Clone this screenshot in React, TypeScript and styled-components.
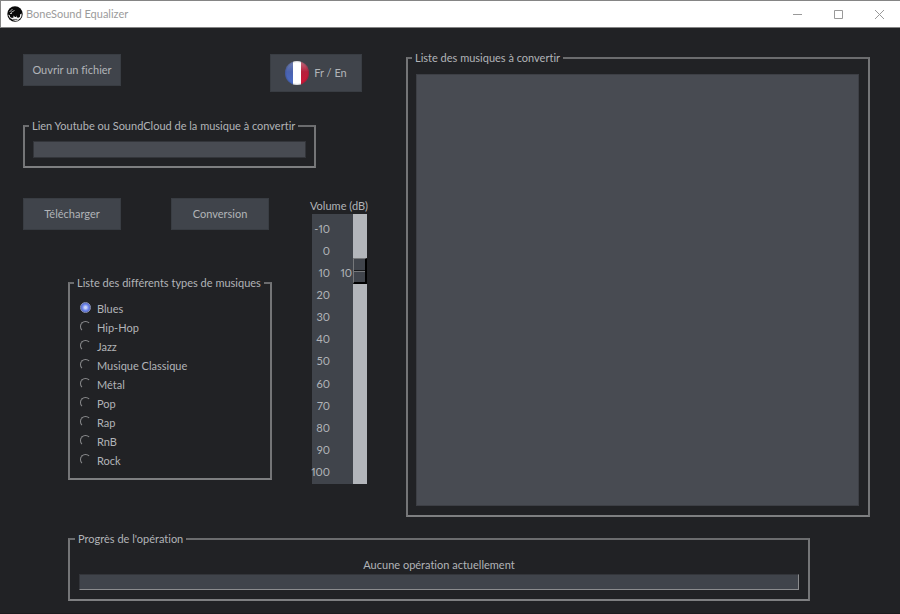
import React, { useState } from "react";
import styled, { createGlobalStyle } from "styled-components";

const GlobalStyle = createGlobalStyle`
  * { box-sizing: border-box; }
  body {
    margin: 0;
    background: #212225;
    color: #b2b4b8;
    font-family: Lato, "Noto Sans", sans-serif;
    font-size: 11px;
    font-variant-ligatures: none;
    line-height: 16px;
  }
  button, input, select { font: inherit; color: inherit; }
`;

const Window = styled.div`
  min-height: 100vh;
  display: flex;
  flex-direction: column;
  border-bottom: 1px solid #1b1a1d;
`;

const TitleBar = styled.header`
  display: flex;
  align-items: center;
  height: 28px;
  padding-left: 6px;
  background: #fff;
  border: 1px solid #858585;
  border-right: 0;
  color: #9b9b9b;
`;

const Title = styled.h1`
  flex: 1;
  margin: 0 0 0 3px;
  font-size: 11px;
  font-weight: 400;
`;

const WindowButton = styled.button`
  display: grid;
  place-items: center;
  width: 41px;
  height: 26px;
  padding: 0;
  border: 0;
  background: none;
`;

const Content = styled.main`
  flex: 1;
  display: grid;
  grid-template-columns: 346px 1fr;
  grid-template-rows: 1fr auto;
  column-gap: 37px;
  row-gap: 14px;
  padding: 22px 30px 12px 23px;
`;

const Controls = styled.div`
  display: flex;
  flex-direction: column;
  padding-top: 4px;
`;

const TopRow = styled.div`
  display: flex;
  align-items: flex-start;
  justify-content: space-between;
  padding-right: 7px;
`;

const Button = styled.button<{ $large?: boolean }>`
  display: flex;
  align-items: center;
  justify-content: center;
  gap: 5px;
  width: ${(p) => (p.$large ? 92 : 98)}px;
  height: ${(p) => (p.$large ? 38 : 32)}px;
  padding: 0;
  border: 1px solid #393d43;
  background: #40444b;
  font-variant-ligatures: none;
`;

const Group = styled.fieldset`
  display: flex;
  flex-direction: column;
  min-width: 0;
  margin: 0;
  padding: 8px;
  border: 2px solid;
  border-color: #6b6c6e #747577 #7e7f81 #747577;
`;

const Legend = styled.legend`
  margin-left: -4px;
  padding: 0 3px;
  white-space: nowrap;
`;

const LinkGroup = styled(Group)`
  width: 293px;
  margin-top: 26px;
  padding: 7px 8px 8px;
`;

const LinkInput = styled.input`
  width: 100%;
  height: 17px;
  padding: 0 2px;
  border: 1px solid #33353a;
  background: #484b52;
`;

const LowerArea = styled.div`
  display: flex;
  justify-content: space-between;
  margin-top: 30px;
`;

const GenreColumn = styled.div`
  width: 249px;
`;

const Actions = styled.div`
  display: flex;
  gap: 50px;
`;

const GenreGroup = styled(Group)`
  width: 204px;
  margin: 45px 0 0 45px;
`;

const Genre = styled.label`
  display: flex;
  align-items: center;
  gap: 6px;
  height: 19px;
  padding-left: 2px;
`;

const Radio = styled.input`
  appearance: none;
  width: 11px;
  height: 11px;
  margin: 0 0 2px;
  border: 1px solid transparent;
  border-top-color: #8a8b8d;
  border-left-color: #8a8b8d;
  border-radius: 50%;

  &:checked {
    border-color: #8a93b5;
    background: radial-gradient(circle, #c8d2f8 0 1px, #7189ee 3px, #4c5fbc 5px);
  }
`;

const Volume = styled.div`
  display: flex;
  flex-direction: column;
  width: 59px;
  white-space: nowrap;
`;

const VolumeBody = styled.div`
  display: flex;
  width: 55px;
  height: 270px;
  margin-left: 2px;
  background: #40444b;
  font-variant-numeric: proportional-nums;
`;

const Ticks = styled.ol`
  display: flex;
  flex-direction: column;
  justify-content: space-between;
  width: 18px;
  margin: 0;
  padding: 7px 0 4px;
  list-style: none;
`;

const Tick = styled.li`
  display: flex;
  justify-content: flex-end;
`;

const ValueColumn = styled.div`
  width: 23px;
  padding-right: 1px;
  text-align: right;
`;

const Slider = styled.input`
  appearance: none;
  writing-mode: vertical-lr;
  width: 14px;
  height: 270px;
  margin: 0;
  background: #b3b6bb;

  &::-webkit-slider-thumb {
    appearance: none;
    width: 14px;
    height: 26px;
    border: 1px solid;
    border-width: 1px 2px 2px 1px;
    border-color: #75777a #000 #000 #75777a;
    background: linear-gradient(#40444b 0 11px, #17181a 11px 12px, #75777a 12px 13px, #40444b 13px);
  }
`;

const ListGroup = styled(Group)`
  padding: 8px 9px 9px 8px;
`;

const SongList = styled.select`
  appearance: none;
  flex: 1;
  width: 100%;
  min-height: 200px;
  padding: 0;
  border: 1px solid #3d3f45;
  border-radius: 0;
  background: #484b52;
`;

const ProgressGroup = styled(Group)`
  grid-column: 1 / -1;
  margin: 0 60px 0 45px;
  padding: 10px 9px 9px;
`;

const Status = styled.p`
  margin: 0 0 1px;
  text-align: center;
`;

const Progress = styled.progress`
  appearance: none;
  display: block;
  width: 100%;
  height: 16px;
  border: 1px solid;
  border-color: #33353a #8b8c8e #8b8c8e #33353a;
  background: #40444b;

  &::-webkit-progress-bar { background: #40444b; }
`;

const genres = ["Blues", "Hip-Hop", "Jazz", "Musique Classique", "Métal", "Pop", "Rap", "RnB", "Rock"];
const ticks = [-10, 0, 10, 20, 30, 40, 50, 60, 70, 80, 90, 100];

const SkullLogo = () => (
  <svg width="16" height="16" viewBox="0 0 16 16" aria-hidden="true">
    <circle cx="8" cy="8" r="7.7" fill="#080808" />
    <path d="M2.500 6l3-3M4 6.500l3.500-2M3 7.500h2" fill="none" stroke="#ccc" strokeWidth=".9" />
    <path d="M1 8.500l2 1v1.500l2 1 1.500-.5V9.500l1.500 1.500h1V9.500l1 2 1.500.2 1.500-1V8.500l1.700-1-.3 3-1.200 2-1.500.9-.5 1-2.500.5-2.500-.6-1.500-1.200-1.800-1z" fill="#f5f5f5" />
    <path d="M5.500 13.500h5M7 12.800v1.500M9 12.800v1.500" stroke="#333" strokeWidth=".6" />
  </svg>
);

const FrenchFlag = () => (
  <svg width="24" height="24" viewBox="0 0 24 24" aria-hidden="true">
    <defs>
      <clipPath id="disc"><circle cx="12" cy="12" r="12" /></clipPath>
      <linearGradient id="blue" x1="0" y1="0" x2="0" y2="1">
        <stop offset="0" stopColor="#7482ad" />
        <stop offset=".45" stopColor="#4a62ae" />
        <stop offset="1" stopColor="#4a6cc8" />
      </linearGradient>
      <linearGradient id="red" x1="0" y1="0" x2="0" y2="1">
        <stop offset="0" stopColor="#c07080" />
        <stop offset=".45" stopColor="#b5203c" />
        <stop offset="1" stopColor="#d01535" />
      </linearGradient>
      <radialGradient id="rim">
        <stop offset=".85" stopColor="#101830" stopOpacity="0" />
        <stop offset="1" stopColor="#101830" stopOpacity=".2" />
      </radialGradient>
    </defs>
    <g clipPath="url(#disc)">
      <path d="M0 0h8v24H0z" fill="url(#blue)" />
      <path d="M8 0h8v24H8z" fill="#fff" />
      <path d="M16 0h8v24h-8z" fill="url(#red)" />
      <circle cx="12" cy="12" r="12" fill="url(#rim)" />
    </g>
  </svg>
);

export default function App() {
  const [genre, setGenre] = useState("Blues");
  const [volume, setVolume] = useState(10);
  const valueOffset = Math.round(((volume + 10) / 110) * 244) + 7;

  return (
    <>
      <GlobalStyle />
      <Window>
        <TitleBar>
          <SkullLogo />
          <Title>BoneSound Equalizer</Title>
          <WindowButton aria-label="Réduire">
            <svg width="11" height="11" stroke="#999" fill="none"><path d="M1 5.500h9" /></svg>
          </WindowButton>
          <WindowButton aria-label="Agrandir">
            <svg width="11" height="11" stroke="#999" fill="none"><path d="M1.500 1.500h8v8h-8z" /></svg>
          </WindowButton>
          <WindowButton aria-label="Fermer">
            <svg width="11" height="11" stroke="#999" fill="none"><path d="M1 1l9 9M10 1l-9 9" /></svg>
          </WindowButton>
        </TitleBar>
        <Content>
          <Controls>
            <TopRow>
              <Button>Ouvrir un fichier</Button>
              <Button $large><FrenchFlag />Fr / En</Button>
            </TopRow>
            <LinkGroup>
              <Legend>Lien Youtube ou SoundCloud de la musique à convertir</Legend>
              <LinkInput type="text" aria-label="Lien Youtube ou SoundCloud de la musique à convertir" />
            </LinkGroup>
            <LowerArea>
              <GenreColumn>
                <Actions>
                  <Button>Télécharger</Button>
                  <Button>Conversion</Button>
                </Actions>
                <GenreGroup>
                  <Legend>Liste des différents types de musiques</Legend>
                  {genres.map((name) => (
                    <Genre key={name}>
                      <Radio type="radio" name="genre" checked={genre === name} onChange={() => setGenre(name)} />
                      {name}
                    </Genre>
                  ))}
                </GenreGroup>
              </GenreColumn>
              <Volume>
                <label htmlFor="volume">Volume (dB)</label>
                <VolumeBody>
                  <Ticks>
                    {ticks.map((t) => <Tick key={t}>{t}</Tick>)}
                  </Ticks>
                  <ValueColumn style={{ paddingTop: valueOffset }}>{volume}</ValueColumn>
                  <Slider
                    id="volume"
                    type="range"
                    min={-10}
                    max={100}
                    value={volume}
                    onChange={(e) => setVolume(Number(e.target.value))}
                  />
                </VolumeBody>
              </Volume>
            </LowerArea>
          </Controls>
          <ListGroup>
            <Legend>Liste des musiques à convertir</Legend>
            <SongList multiple aria-label="Liste des musiques à convertir" />
          </ListGroup>
          <ProgressGroup>
            <Legend>Progrès de l'opération</Legend>
            <Status>Aucune opération actuellement</Status>
            <Progress value={0} max={100} aria-label="Progrès de l'opération" />
          </ProgressGroup>
        </Content>
      </Window>
    </>
  );
}
